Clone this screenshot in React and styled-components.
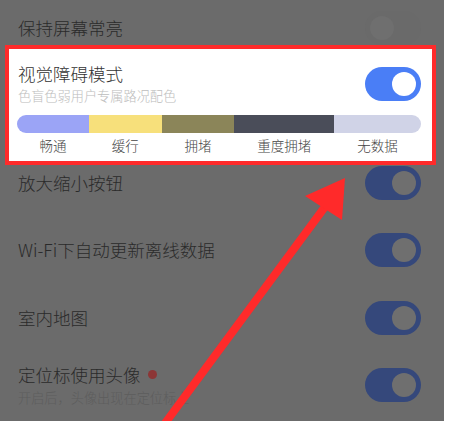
import React from "react";
import styled, { createGlobalStyle } from "styled-components";

const GlobalStyle = createGlobalStyle`
  html, body {
    margin: 0;
    padding: 0;
    background: #ffffff;
  }
  body {
    font-family: "Noto Sans CJK SC", "Noto Sans", sans-serif;
  }
`;

const Screen = styled.div`
  position: relative;
  width: 444px;
  height: 421px;
  overflow: hidden;
  background: #6b6b6b;
  display: flex;
  flex-direction: column;
`;

const Row = styled.div`
  display: flex;
  align-items: center;
  justify-content: space-between;
  height: ${(p) => p.h || 36}px;
  margin-top: ${(p) => p.mt || 0}px;
  padding: 0 23px 0 18px;
  flex-shrink: 0;
`;

const TextCol = styled.div`
  display: flex;
  flex-direction: column;
`;

const Title = styled.div`
  display: flex;
  align-items: center;
  font-size: 17.5px;
  font-weight: 300;
  line-height: 22px;
  color: ${(p) => (p.lit ? "#333333" : "#2a2a2a")};
`;

const Sub = styled.div`
  font-size: 13.2px;
  font-weight: 300;
  line-height: 18px;
  margin-top: ${(p) => p.mt || 3}px;
  color: ${(p) => (p.lit ? "#bdbdbd" : "#5d5d5d")};
`;

const Dot = styled.span`
  width: 9px;
  height: 9px;
  border-radius: 50%;
  background: #8c3636;
  margin-left: 7px;
`;

const Track = styled.div`
  width: 56px;
  height: 34px;
  border-radius: 17px;
  background: ${(p) => p.bg};
  display: flex;
  align-items: center;
  justify-content: ${(p) => (p.on ? "flex-end" : "flex-start")};
  padding: 0 5px;
  box-sizing: border-box;
  flex-shrink: 0;
`;

const Knob = styled.div`
  width: 24px;
  height: 24px;
  border-radius: 50%;
  background: ${(p) => p.bg};
`;

const Toggle = ({ on = true, track, knob }) => (
  <Track on={on} bg={track}>
    <Knob bg={knob} />
  </Track>
);

const Highlight = styled.div`
  margin: 0 8px 0 5px;
  height: 120px;
  border: 4px solid #ff2b2b;
  background: #ffffff;
  box-sizing: border-box;
  padding: 14px 11px 0 9px;
  display: flex;
  flex-direction: column;
  flex-shrink: 0;
`;

const HeadRow = styled.div`
  display: flex;
  align-items: center;
  justify-content: space-between;
`;

const Bar = styled.div`
  display: flex;
  height: 18px;
  margin: 10px 0 0 -1px;
  border-radius: 9px;
  overflow: hidden;
`;

const Seg = styled.div`
  width: ${(p) => p.w}px;
  background: ${(p) => p.c};
`;

const Labels = styled.div`
  display: flex;
  margin-left: -1px;
`;

const Label = styled.div`
  width: ${(p) => p.w}px;
  text-align: center;
  font-size: 13.5px;
  font-weight: 300;
  line-height: 24px;
  color: #444444;
`;

const Arrow = styled.svg`
  position: absolute;
  left: 0;
  top: 0;
  pointer-events: none;
`;

const segs = [
  { w: 72, c: "#9ba4f6", t: "畅通" },
  { w: 73, c: "#f7e07b", t: "缓行" },
  { w: 73, c: "#8b8559", t: "拥堵" },
  { w: 100, c: "#4a4d59", t: "重度拥堵" },
  { w: 87, c: "#d0d3e7", t: "无数据" },
];

const dim = { track: "#35487b", knob: "#6f6f6f" };

export default function App() {
  return (
    <>
      <GlobalStyle />
      <Screen>
        <Row h={35} mt={10}>
          <Title>保持屏幕常亮</Title>
          <Toggle on={false} track="#6a6a6a" knob="#6f6f6f" />
        </Row>

        <Highlight>
          <HeadRow>
            <TextCol>
              <Title lit>视觉障碍模式</Title>
              <Sub lit mt={2}>色盲色弱用户专属路况配色</Sub>
            </TextCol>
            <Toggle track="#4a7ef6" knob="#ffffff" />
          </HeadRow>
          <Bar>
            {segs.map((s) => (
              <Seg key={s.t} w={s.w} c={s.c} />
            ))}
          </Bar>
          <Labels>
            {segs.map((s) => (
              <Label key={s.t} w={s.w}>
                {s.t}
              </Label>
            ))}
          </Labels>
        </Highlight>

        <Row>
          <Title>放大缩小按钮</Title>
          <Toggle {...dim} />
        </Row>
        <Row mt={31}>
          <Title>Wi-Fi下自动更新离线数据</Title>
          <Toggle {...dim} />
        </Row>
        <Row mt={32}>
          <Title>室内地图</Title>
          <Toggle {...dim} />
        </Row>
        <Row h={50} mt={24}>
          <TextCol>
            <Title>
              定位标使用头像
              <Dot />
            </Title>
            <Sub>开启后，头像出现在定位标上</Sub>
          </TextCol>
          <Toggle {...dim} />
        </Row>

        <Arrow width="444" height="421" viewBox="0 0 444 421">
          <line x1="163" y1="426" x2="330" y2="200" stroke="#ff2a2a" strokeWidth="8" />
          <polygon points="345,178 305,196 342,220" fill="#ff2a2a" />
        </Arrow>
      </Screen>
    </>
  );
}
